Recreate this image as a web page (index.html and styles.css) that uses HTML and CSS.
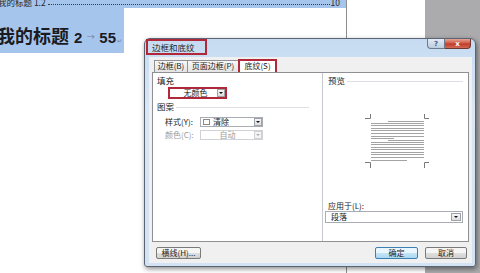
FILE: index.html
```html
<!DOCTYPE html>
<html lang="zh">
<head>
<meta charset="utf-8">
<title>边框和底纹</title>
<link rel="stylesheet" href="styles.css">
</head>
<body>
<div class="screen">
  <div class="page">
    <div class="doc-col">
      <div class="toc-row">
        <span class="toc-text">我的标题 1.2</span>
        <span class="leader"></span>
        <span class="toc-num">10</span>
      </div>
      <div class="h2-row">
        <div class="h2-sel">
          <span class="h2-text">我的标题<span class="num first">2</span><span class="tabmark">→</span><span class="num">55</span><span class="para">↵</span></span>
        </div>
      </div>
    </div>
  </div>
  <div class="gutter"></div>

  <div class="dialog">
    <div class="titlebar">
      <div class="title hl">边框和底纹</div>
      <div class="caption-btns">
        <div class="cap help">?</div>
        <div class="cap close">x</div>
      </div>
    </div>
    <div class="client">
      <div class="tabs">
        <div class="tab t1">边框(B)</div>
        <div class="tab t2">页面边框(P)</div>
        <div class="tab t3 active">底纹(S)</div>
      </div>
      <div class="panel">
        <div class="left">
          <div class="group-label">填充</div>
          <div class="fill-drop hl">
            <span class="fill-text">无颜色</span>
            <span class="drop-btn"></span>
          </div>
          <div class="group-row">
            <span class="group-label inline">图案</span>
            <span class="rule"></span>
          </div>
          <div class="field-row first">
            <span class="field-label">样式(Y):</span>
            <div class="combo">
              <span class="swatch"></span>
              <span class="combo-text">清除</span>
              <span class="drop-btn"></span>
            </div>
          </div>
          <div class="field-row disabled">
            <span class="field-label">颜色(C):</span>
            <div class="combo">
              <span class="combo-text center">自动</span>
              <span class="drop-btn"></span>
            </div>
          </div>
        </div>
        <div class="right">
          <div class="group-row">
            <span class="group-label inline">预览</span>
            <span class="rule"></span>
          </div>
          <div class="preview">
            <svg width="64" height="54" viewBox="0 0 64 54">
              <g fill="none" stroke="#7a7a7a" stroke-width="1">
                <path d="M5.5 0V4.5H0"/>
                <path d="M59.5 0V4.5H64"/>
                <path d="M0 48.5H5.5V54"/>
                <path d="M64 48.5H59.5V54"/>
              </g>
              <g fill="#a3a3a3">
                <rect x="23" y="7" width="36" height="1"/>
                <rect x="6" y="9" width="53" height="1"/>
                <rect x="6" y="11" width="53" height="1"/>
                <rect x="6" y="14" width="53" height="1"/>
                <rect x="6" y="16" width="53" height="1"/>
                <rect x="6" y="19" width="53" height="1"/>
                <rect x="6" y="22" width="53" height="1"/>
                <rect x="6" y="24" width="23" height="1"/>
                <rect x="23" y="26" width="36" height="1"/>
                <rect x="6" y="28" width="53" height="1"/>
                <rect x="6" y="30" width="53" height="1"/>
                <rect x="6" y="33" width="53" height="1"/>
                <rect x="6" y="35" width="53" height="1"/>
                <rect x="6" y="38" width="53" height="1"/>
                <rect x="6" y="40" width="53" height="1"/>
                <rect x="6" y="43" width="53" height="1"/>
                <rect x="6" y="46" width="36" height="1"/>
              </g>
            </svg>
          </div>
          <div class="apply">
            <div class="apply-label">应用于(L):</div>
            <div class="apply-drop">
              <span class="combo-text">段落</span>
              <span class="drop-btn"></span>
            </div>
          </div>
        </div>
      </div>
      <div class="buttons">
        <div class="btn hline">横线(H)...</div>
        <div class="spacer"></div>
        <div class="btn primary ok">确定</div>
        <div class="btn cancel">取消</div>
      </div>
    </div>
  </div>
</div>
</body>
</html>
```

FILE: styles.css
```css
body {
  margin: 0;
}

.screen {
  position: relative;
  width: 480px;
  height: 273px;
  overflow: hidden;
  display: flex;
  background: #fff;
  font-family: "Noto Sans CJK SC", "Noto Sans", sans-serif;
}

/* ---------- document ---------- */
.page {
  width: 425px;
  flex: none;
  background: #fff;
}

.doc-col {
  width: 347px;
  height: 100%;
  box-sizing: border-box;
  border-right: 1px solid #8d8d8d;
}

.toc-row {
  height: 8px;
  background: #a6c5ed;
  display: flex;
  align-items: flex-start;
  overflow: hidden;
  font-size: 8.5px;
  line-height: 10px;
  color: #2a2a2a;
}

.toc-text {
  margin-top: -3px;
  margin-left: -2px;
  white-space: nowrap;
}

.leader {
  flex: 1;
  height: 4px;
  margin: 0 1px 0 2px;
  border-bottom: 1px dotted #3a3a3a;
}

.toc-num {
  margin-top: -3px;
  margin-right: 6px;
}

.h2-row {
  height: 45px;
}

.h2-sel {
  width: 124px;
  height: 45px;
  background: #a6c5ed;
  overflow: hidden;
}

.h2-text {
  display: flex;
  align-items: baseline;
  margin-left: -3px;
  padding-top: 17px;
  font-size: 18px;
  line-height: 20px;
  font-weight: bold;
  color: #1b1b22;
  white-space: nowrap;
}

.num {
  font-family: "Liberation Sans", "Noto Sans", sans-serif;
  font-size: 15px;
  font-weight: bold;
}

.num.first {
  margin-left: 5px;
}

.tabmark {
  display: inline-block;
  width: 17px;
  text-align: center;
  font-size: 8px;
  font-weight: normal;
  color: #6f7f99;
  position: relative;
  top: -3px;
}

.para {
  font-size: 6px;
  font-weight: normal;
  color: #6f7f99;
  margin-left: 1px;
}

.gutter {
  flex: 1;
  background: #ababad;
}

/* ---------- dialog ---------- */
.dialog {
  position: absolute;
  left: 144px;
  top: 38px;
  width: 332px;
  height: 229px;
  box-sizing: border-box;
  border: 1px solid #5a6472;
  border-radius: 6px 6px 3px 3px;
  background: linear-gradient(#c6dbf1, #d8e6f5 30%, #d3e3f4);
  box-shadow: 1px 2px 5px rgba(0, 0, 0, 0.45);
  padding: 0 3px 3px 4px;
  display: flex;
  flex-direction: column;
  font-size: 9px;
  color: #222;
}

.titlebar {
  height: 18px;
  display: flex;
  align-items: flex-start;
}

.hl {
  border: 2px solid #b0283a;
}

.title {
  margin-left: -3px;
  width: 61px;
  height: 16px;
  box-sizing: border-box;
  padding-left: 4px;
  line-height: 12px;
  font-size: 8.5px;
  color: #1d1d1d;
}

.caption-btns {
  margin-left: auto;
  margin-right: 1px;
  display: flex;
}

.cap {
  height: 10px;
  box-sizing: border-box;
  display: flex;
  align-items: center;
  justify-content: center;
  font-family: "DejaVu Sans", sans-serif;
  font-weight: bold;
  font-size: 7px;
  line-height: 8px;
}

.help {
  width: 18px;
  border: 1px solid #6b7a8d;
  border-top: none;
  border-radius: 0 0 0 4px;
  background: linear-gradient(#e3ebf5, #bccbdc);
  color: #3d5f8f;
}

.close {
  width: 26px;
  border: 1px solid #6d3832;
  border-top: none;
  border-left: none;
  border-radius: 0 0 4px 0;
  background: linear-gradient(#e6a595, #cf5a48 45%, #c23a2a 55%, #d26b55);
  color: #fff;
}

.client {
  flex: 1;
  background: #f0f0f0;
  padding: 2px 3px 4px 3px;
  display: flex;
  flex-direction: column;
}

/* tabs */
.tabs {
  height: 13px;
  display: flex;
  align-items: flex-end;
  padding-left: 2px;
}

.tab {
  height: 12px;
  box-sizing: border-box;
  border: 1px solid #8e9094;
  border-bottom: none;
  background: linear-gradient(#f7f7f7, #e4e4e4);
  font-size: 8px;
  line-height: 10px;
  text-align: center;
  white-space: nowrap;
  color: #222;
  margin-right: -1px;
}

.t1 { width: 34px; }
.t2 { width: 52px; }
.t3 { width: 39px; }

.tab.active {
  height: 13px;
  background: #fff;
  border: 2px solid #b0283a;
  border-bottom: none;
  line-height: 10px;
  position: relative;
  z-index: 1;
}

.panel {
  height: 170px;
  box-sizing: border-box;
  border: 1px solid #8e9094;
  background: #fff;
  display: flex;
}

.left {
  width: 170px;
  padding: 2px 0 0 4px;
  box-sizing: border-box;
  display: flex;
  flex-direction: column;
}

.group-label {
  line-height: 11px;
  font-size: 8.5px;
  color: #222;
}

.group-row {
  display: flex;
  align-items: center;
  gap: 2px;
  line-height: 11px;
}

.rule {
  flex: 1;
  border-top: 1px solid #dcdfe3;
  margin-top: 2px;
}

.left .group-row {
  margin-top: 2px;
  margin-right: 13px;
}

.fill-drop {
  margin-top: 1px;
  margin-left: 11px;
  width: 59px;
  height: 12px;
  box-sizing: border-box;
  display: flex;
  background: #fff;
}

.fill-text {
  flex: 1;
  text-align: center;
  line-height: 8px;
  font-size: 8px;
  padding-left: 4px;
}

.drop-btn {
  width: 8px;
  flex: none;
  box-sizing: border-box;
  border: 1px solid #9ea3a9;
  background: linear-gradient(#f6f6f6, #dcdcdc);
  display: flex;
  align-items: center;
  justify-content: center;
}

.drop-btn::after {
  content: "";
  border-left: 2px solid transparent;
  border-right: 2px solid transparent;
  border-top: 2.5px solid #111;
}

.field-row {
  display: flex;
  align-items: center;
  height: 10px;
  margin-left: 8px;
}

.field-row.first {
  margin-top: 5px;
}

.field-row + .field-row {
  margin-top: 3px;
}

.field-label {
  width: 35px;
  flex: none;
  font-size: 8px;
  line-height: 10px;
  white-space: nowrap;
}

.combo {
  width: 63px;
  height: 10px;
  box-sizing: border-box;
  border: 1px solid #a9adb3;
  background: #fff;
  display: flex;
  align-items: stretch;
}

.swatch {
  width: 7px;
  height: 6px;
  margin: 1px 3px 0 2px;
  border: 1px solid #8a8a8a;
  background: #fff;
  box-sizing: border-box;
  flex: none;
}

.combo-text {
  flex: 1;
  font-size: 8px;
  line-height: 8px;
}

.combo-text.center {
  text-align: center;
}

.disabled .field-label,
.disabled .combo-text {
  color: #9a9a9a;
}

.disabled .combo {
  border-color: #cfd2d6;
}

.disabled .drop-btn {
  border-color: #d0d0d0;
  background: #f4f4f4;
}

.disabled .drop-btn::after {
  border-top-color: #b0b0b0;
}

.right {
  flex: 1;
  border-left: 1px solid #c5c8cc;
  padding: 2px 5px 18px 5px;
  display: flex;
  flex-direction: column;
}

.preview {
  margin-top: 28px;
  display: flex;
  justify-content: center;
  padding-left: 3px;
}

.preview svg {
  display: block;
}

.apply {
  margin-top: auto;
}

.apply-label {
  font-size: 8px;
  line-height: 10px;
}

.apply-drop {
  margin-left: -3px;
  width: 138px;
  height: 12px;
  box-sizing: border-box;
  border: 1px solid #a9adb3;
  background: #fff;
  display: flex;
  padding: 1px;
}

.apply-drop .combo-text {
  padding-left: 4px;
  line-height: 8px;
}

.apply-drop .drop-btn {
  width: 10px;
}

/* bottom buttons */
.buttons {
  margin-top: 5px;
  height: 12px;
  display: flex;
  padding: 0 2px 0 4px;
}

.spacer {
  flex: 1;
}

.btn {
  height: 12px;
  box-sizing: border-box;
  border: 1px solid #7a7a7a;
  border-radius: 2px;
  background: linear-gradient(#f5f5f5 50%, #dfdfdf 50%, #d2d2d2);
  font-size: 8px;
  line-height: 10px;
  text-align: center;
  color: #222;
  white-space: nowrap;
}

.hline { width: 45px; }
.ok { width: 43px; margin-right: 7px; }
.cancel { width: 42px; }

.btn.primary {
  border-color: #3c7fb1;
  background: linear-gradient(#eaf6fd 50%, #c4e5f7 50%, #acd7f0);
}
```
